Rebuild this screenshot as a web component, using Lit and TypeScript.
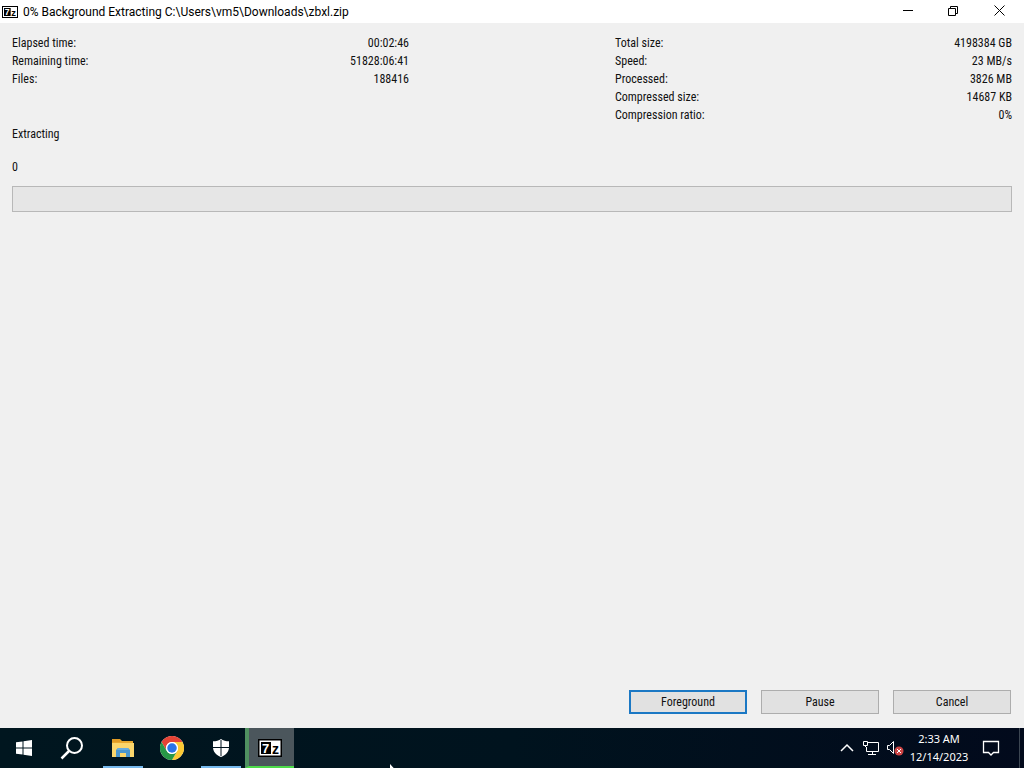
import { LitElement, html, css, svg } from "lit";
import { customElement, property } from "lit/decorators.js";

type Stat = [label: string, value: string];

const leftStats: Stat[] = [
  ["Elapsed time:", "00:02:46"],
  ["Remaining time:", "51828:06:41"],
  ["Files:", "188416"],
];

const rightStats: Stat[] = [
  ["Total size:", "4198384 GB"],
  ["Speed:", "23 MB/s"],
  ["Processed:", "3826 MB"],
  ["Compressed size:", "14687 KB"],
  ["Compression ratio:", "0%"],
];

/* The archiver's logo, shared by the title bar and the taskbar. */
const sevenZip = svg`
  <rect width="24" height="18" fill="#000"/>
  <rect x="1.500" y="1.500" width="21" height="15" fill="#fff"/>
  <rect x="3" y="3" width="10" height="12" fill="#000"/>
  <text x="4" y="14" font-family="Liberation Sans, sans-serif" font-weight="700" font-size="13" fill="#fff">7</text>
  <text x="14" y="15" font-family="Liberation Sans, sans-serif" font-weight="700" font-size="14" fill="#000">z</text>`;

@customElement("title-bar")
class TitleBar extends LitElement {
  @property() heading = "";

  static styles = css`
    :host {
      display: flex;
      align-items: center;
      height: 23px;
      padding: 0 1px 0 2px;
      background: #fff;
      color: #000;
    }
    .logo {
      width: 16px;
      height: 12px;
      margin-right: 5px;
    }
    .heading {
      flex: 1;
      margin: 0;
      font: 400 12px/24px Roboto, sans-serif;
      white-space: nowrap;
    }
    .caption {
      display: grid;
      place-items: center;
      width: 46px;
      height: 22px;
      padding: 0;
      border: 0;
      background: none;
      align-self: flex-start;
    }
    .caption svg {
      fill: none;
      stroke: #000;
    }
  `;

  render() {
    return html`
      <svg class="logo" viewBox="0 0 24 18" preserveAspectRatio="none" aria-hidden="true">${sevenZip}</svg>
      <h1 class="heading">${this.heading}</h1>
      <button class="caption" aria-label="Minimize">
        <svg width="12" height="12"><path d="M1 5.5h10" /></svg>
      </button>
      <button class="caption" aria-label="Restore">
        <svg width="12" height="12"><path d="M.500 3.500h7v7h-7zM2.500 3.500v-2h7v7h-2" /></svg>
      </button>
      <button class="caption" aria-label="Close">
        <svg width="12" height="12"><path d="M.500.500l10 10M10.500.500l-10 10" /></svg>
      </button>
    `;
  }
}

@customElement("progress-panel")
class ProgressPanel extends LitElement {
  static styles = css`
    :host {
      display: flex;
      flex-direction: column;
      box-sizing: border-box;
      padding: 11px 12px 14px;
      background: #f0f0f0;
      color: #111;
      font: 12px/18px "Roboto Condensed", Roboto, sans-serif;
    }
    .stats {
      display: grid;
      grid-template-columns: 1fr 1fr;
      column-gap: 206px;
    }
    .list {
      margin: 0;
    }
    .row {
      display: flex;
      justify-content: space-between;
    }
    .value {
      margin: 0;
    }
    .status {
      margin: 1px 0 15px;
    }
    .bar {
      appearance: none;
      display: block;
      box-sizing: border-box;
      width: 100%;
      height: 26px;
      margin-top: 10px;
      border: 1px solid #b8b8b8;
      background: #e6e6e6;
    }
    .bar::-webkit-progress-bar {
      background: #e6e6e6;
    }
    .bar::-webkit-progress-value {
      background: #06b025;
    }
    .actions {
      display: flex;
      justify-content: flex-end;
      gap: 14px;
      margin-top: auto;
      padding-right: 1px;
    }
    .action {
      box-sizing: border-box;
      width: 118px;
      height: 24px;
      padding: 0;
      border: 1px solid #adadad;
      background: #e1e1e1;
      color: #111;
      font: inherit;
    }
    .primary {
      border: 2px solid #1b78c4;
    }
  `;

  private list(stats: Stat[]) {
    return html`<dl class="list">
      ${stats.map(
        ([label, value]) => html`<div class="row"><dt>${label}</dt><dd class="value">${value}</dd></div>`,
      )}
    </dl>`;
  }

  render() {
    return html`
      <div class="stats">${this.list(leftStats)}${this.list(rightStats)}</div>
      <div class="status">Extracting</div>
      <label for="progress">0</label>
      <progress id="progress" class="bar" value="0" max="100"></progress>
      <div class="actions">
        <button class="action primary">Foreground</button>
        <button class="action">Pause</button>
        <button class="action">Cancel</button>
      </div>
    `;
  }
}

@customElement("task-bar")
class TaskBar extends LitElement {
  static styles = css`
    :host {
      display: flex;
      height: 40px;
      background: linear-gradient(90deg, #00161f, #00131e 50%, #020a1c);
      color: #fff;
    }
    button {
      display: grid;
      place-items: center;
      box-sizing: border-box;
      height: 40px;
      padding: 0;
      border: 0;
      background: none;
      color: inherit;
    }
    svg {
      display: block;
    }
    .start {
      width: 48px;
    }
    .app {
      width: 49px;
    }
    .search {
      width: 50px;
      padding-right: 2px;
    }
    .running {
      background: linear-gradient(#76b9ed, #76b9ed) center bottom / 40px 2px no-repeat;
    }
    .active {
      border-left: 4px solid #4f9060;
      border-bottom: 2px solid #4ddb4a;
      padding: 2px 4px 0 0;
      background: #4b565c;
    }
    .tray {
      display: flex;
      align-items: center;
      margin-left: auto;
    }
    .icon {
      width: 24px;
    }
    .clock {
      width: 64px;
      font: 11px/18px "Noto Sans", sans-serif;
      text-align: center;
      white-space: nowrap;
    }
    .notices {
      width: 39px;
    }
    .desktop {
      width: 5px;
      margin-left: 9px;
      border-left: 1px solid #3c4652;
    }
  `;

  render() {
    return html`
      <button class="start" aria-label="Start">
        <svg width="16" height="16" fill="#fff">
          <path d="M0 2.300L6.500 1.400V7.500H0zM7.500 1.200L16 0v7.500H7.500zM0 8.500h6.500v6.100L0 13.700zM7.500 8.500H16V16l-8.500-1.200z" />
        </svg>
      </button>
      <button class="app search" aria-label="Search">
        <svg width="24" height="24" fill="none" stroke="#fff" stroke-width="2">
          <circle cx="14.500" cy="9.500" r="7.500" /><path d="M9 15l-7.500 7.500" stroke-width="2.500" />
        </svg>
      </button>
      <button class="app running" aria-label="File Explorer">
        <svg width="22" height="20">
          <path d="M0 1h8l2 2h11v16H0z" fill="#e8a82e" />
          <path d="M0 1h8v3H0z" fill="#e09b25" />
          <path d="M0 5h22v14H0z" fill="#fbd66c" />
          <path d="M4 19v-7l2-2h10l2 2v7h-4v-4H8v4z" fill="#4a96cf" />
          <path d="M6 10h10l1 2H5z" fill="#68ade0" />
        </svg>
      </button>
      <button class="app" aria-label="Google Chrome">
        <svg width="24" height="24" viewBox="0 0 48 48">
          <circle cx="24" cy="24" r="24" fill="#fff" />
          <path d="M3.200 12A24 24 0 0 1 44.800 12H24A12 12 0 0 0 13.600 30z" fill="#e54335" />
          <path d="M44.800 12A24 24 0 0 1 24 48L34.400 30A12 12 0 0 0 24 12z" fill="#fcc934" />
          <path d="M24 48A24 24 0 0 1 3.200 12L13.600 30A12 12 0 0 0 34.400 30z" fill="#279847" />
          <circle cx="24" cy="24" r="12" fill="#fff" /><circle cx="24" cy="24" r="9.500" fill="#2a74e7" />
        </svg>
      </button>
      <button class="app running" aria-label="Windows Security">
        <svg width="16" height="18">
          <path d="M8 0c2 1.700 5 2.300 8 2.300v6c0 4.400-3 7.700-8 9.700-5-2-8-5.300-8-9.700v-6C3 2.300 6 1.700 8 0z" fill="#fff" />
          <path d="M8 1v16M0 8.500h16" stroke="#00131e" />
        </svg>
      </button>
      <button class="app active" aria-label="7-Zip">
        <svg width="24" height="18">${sevenZip}</svg>
      </button>
      <div class="tray">
        <button class="icon" aria-label="Show hidden icons">
          <svg width="14" height="10" fill="none" stroke="#fff" stroke-width="1.500"><path d="M1 8l6-6 6 6" /></svg>
        </button>
        <button class="icon" aria-label="Network">
          <svg width="16" height="14" fill="none" stroke="#fff">
            <path d="M5 1.500h10.500v9H3.500V6M9.500 10.500v3M5 13.500h8M.500.500h4v4h-4zM2.500 4v2" />
          </svg>
        </button>
        <button class="icon" aria-label="Volume muted">
          <svg width="18" height="16" fill="none" stroke="#fff">
            <path d="M1.500 5.500h2l4-4v12l-4-4h-2z" />
            <circle cx="13" cy="11" r="4.500" fill="#cc4444" stroke="none" />
            <path d="M11 9l4 4M15 9l-4 4" />
          </svg>
        </button>
        <div class="clock"><div>2:33 AM</div><div>12/14/2023</div></div>
        <button class="notices" aria-label="Notifications">
          <svg width="18" height="18" fill="none" stroke="#fff" stroke-width="1.300">
            <path d="M1.500 2.500h15v11h-5L9 16l-2.500-2.500h-5z" />
          </svg>
        </button>
        <button class="desktop" aria-label="Show desktop"></button>
      </div>
    `;
  }
}

@customElement("app-root")
class AppRoot extends LitElement {
  static styles = css`
    :host {
      display: grid;
      grid-template-rows: auto 1fr auto;
      position: relative;
      height: 100vh;
      overflow: hidden;
    }
    /* Mouse pointer resting over the taskbar. */
    .pointer {
      position: absolute;
      left: 390px;
      top: 764px;
    }
  `;

  render() {
    return html`
      <title-bar heading="0% Background Extracting C:\\Users\\vm5\\Downloads\\zbxl.zip"></title-bar>
      <progress-panel></progress-panel>
      <task-bar></task-bar>
      <svg class="pointer" width="12" height="18" aria-hidden="true"><path d="M0 0v16l4-4h7z" fill="#fff" /></svg>
    `;
  }
}
